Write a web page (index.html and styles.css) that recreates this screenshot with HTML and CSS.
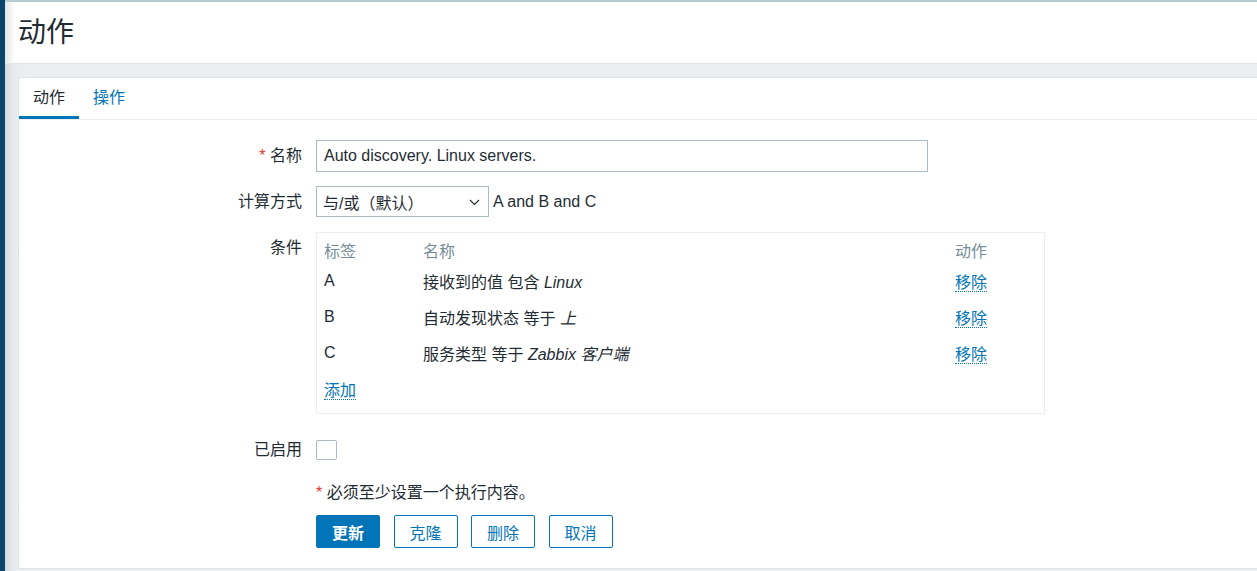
FILE: index.html
```html
<!DOCTYPE html>
<html lang="zh">
<head>
<meta charset="utf-8">
<link rel="stylesheet" href="styles.css">
</head>
<body>
<div class="page">
  <div class="edge"></div>
  <main class="main">
    <header class="header"><h1 class="title">动作</h1></header>
    <section class="card">
      <nav class="tabs">
        <span class="tab active">动作</span>
        <span class="tab">操作</span>
      </nav>
      <form class="form">
        <div class="row row-name">
          <label class="label"><span class="req">*</span> 名称</label>
          <div class="field"><input class="text-input" type="text" value="Auto discovery. Linux servers."></div>
        </div>
        <div class="row">
          <label class="label">计算方式</label>
          <div class="field inline">
            <div class="select">
              <span>与/或（默认）</span>
              <svg class="chev" width="11" height="7" viewBox="0 0 11 7"><path d="M1 1l4.5 4.5L10 1" fill="none" stroke="#1f2c33" stroke-width="1.1"/></svg>
            </div>
            <span class="formula">A and B and C</span>
          </div>
        </div>
        <div class="row">
          <label class="label">条件</label>
          <div class="field">
            <div class="cond-box">
              <table class="cond">
                <thead>
                  <tr><th class="c1">标签</th><th class="c2">名称</th><th class="c3">动作</th></tr>
                </thead>
                <tbody>
                  <tr><td>A</td><td>接收到的值 包含 <em>Linux</em></td><td><a class="link">移除</a></td></tr>
                  <tr><td>B</td><td>自动发现状态 等于 <em>上</em></td><td><a class="link">移除</a></td></tr>
                  <tr><td>C</td><td>服务类型 等于 <em>Zabbix 客户端</em></td><td><a class="link">移除</a></td></tr>
                  <tr><td colspan="3"><a class="link">添加</a></td></tr>
                </tbody>
              </table>
            </div>
          </div>
        </div>
        <div class="row row-enabled">
          <label class="label">已启用</label>
          <div class="field"><span class="checkbox"></span></div>
        </div>
        <div class="row row-note">
          <span class="label"></span>
          <div class="field note"><span class="req">*</span> 必须至少设置一个执行内容。</div>
        </div>
        <div class="row row-buttons">
          <span class="label"></span>
          <div class="field buttons">
            <button type="button" class="btn primary">更新</button>
            <button type="button" class="btn">克隆</button>
            <button type="button" class="btn">删除</button>
            <button type="button" class="btn">取消</button>
          </div>
        </div>
      </form>
    </section>
  </main>
</div>
</body>
</html>
```

FILE: styles.css
```css
* { box-sizing: border-box; }
html, body { margin: 0; padding: 0; }
body {
  font-family: "Liberation Sans", Arial, "Noto Sans CJK SC", sans-serif;
  font-size: 16px;
  color: #1f2c33;
  background: #ebeef0;
  width: 1257px;
  height: 571px;
  overflow: hidden;
}
.page {
  display: flex;
  height: 571px;
}
.edge {
  width: 5px;
  flex: none;
  background: #0b4569;
}
.main {
  flex: 1;
  display: flex;
  flex-direction: column;
  background: linear-gradient(to right, #d5dbe0 0, #e6eaed 8px, #ebeef0 13px);
  border-top: 2px solid #b6cbd2;
  min-height: 0;
}
.header {
  flex: none;
  height: 62px;
  background: linear-gradient(to right, #e2e6e9 0, #fff 10px);
  border-bottom: 1px solid #dfe4e7;
  padding-left: 13px;
  display: flex;
  align-items: center;
}
.title {
  margin: 0;
  font-size: 28px;
  font-weight: normal;
  color: #1f2c33;
  line-height: 1;
  padding-top: 1px;
}
.card {
  margin: 13px 0 0 13px;
  background: #fff;
  border: 1px solid #dfe4e7;
  border-right: none;
  flex: none;
  height: 492px;
}
.tabs {
  display: flex;
  height: 42px;
  border-bottom: 1px solid #ebeef0;
}
.tab {
  padding: 0 14px;
  line-height: 39px;
  color: #0275b8;
  border-bottom: 3px solid transparent;
}
.tab.active {
  color: #1f2c33;
  border-bottom-color: #0275b8;
}
.form {
  padding-top: 20px;
  display: flex;
  flex-direction: column;
}
.row {
  display: flex;
  column-gap: 14px;
  margin-bottom: 15px;
}
.row-name { margin-bottom: 14px; }
.label {
  width: 283px;
  flex: none;
  text-align: right;
  line-height: 31px;
}
.req { color: #e33734; }
.field { flex: 1; }
.inline { display: flex; align-items: center; gap: 4px; }
.text-input {
  width: 612px;
  height: 32px;
  border: 1px solid #acbbc2;
  padding: 0 7px;
  font: inherit;
  color: #1f2c33;
  outline: none;
}
.select {
  width: 173px;
  height: 31px;
  border: 1px solid #acbbc2;
  display: flex;
  align-items: center;
  justify-content: space-between;
  padding: 0 8px 0 6px;
}
.chev { margin-top: 1px; }
.cond-box {
  width: 729px;
  border: 1px solid #ebeef0;
  padding: 4px 7px 6px 7px;
}
.cond {
  border-collapse: collapse;
  width: 100%;
}
.cond th {
  font-weight: normal;
  color: #768d99;
  text-align: left;
  height: 26px;
  padding: 0;
}
.cond td {
  height: 36px;
  padding: 0;
}
.cond em { font-style: italic; }
.c1 { width: 99px; }
.c2 { width: 532px; }
.link {
  color: #0275b8;
  border-bottom: 1px dotted #0275b8;
  cursor: pointer;
}
.row-enabled { margin-top: 5px; margin-bottom: 12px; }
.row-enabled .field { display: flex; align-items: center; }
.checkbox {
  width: 21px;
  height: 20px;
  border: 1px solid #acbbc2;
  border-radius: 2px;
  display: inline-block;
}
.row-note { margin-bottom: 7px; }
.note { line-height: 31px; }
.buttons { display: flex; gap: 13.5px; }
.btn {
  width: 64px;
  height: 33px;
  font: inherit;
  color: #0275b8;
  background: #fff;
  border: 1px solid #0275b8;
  border-radius: 2px;
  padding: 0;
}
.btn.primary {
  background: #0275b8;
  color: #fff;
  font-weight: bold;
}
```
